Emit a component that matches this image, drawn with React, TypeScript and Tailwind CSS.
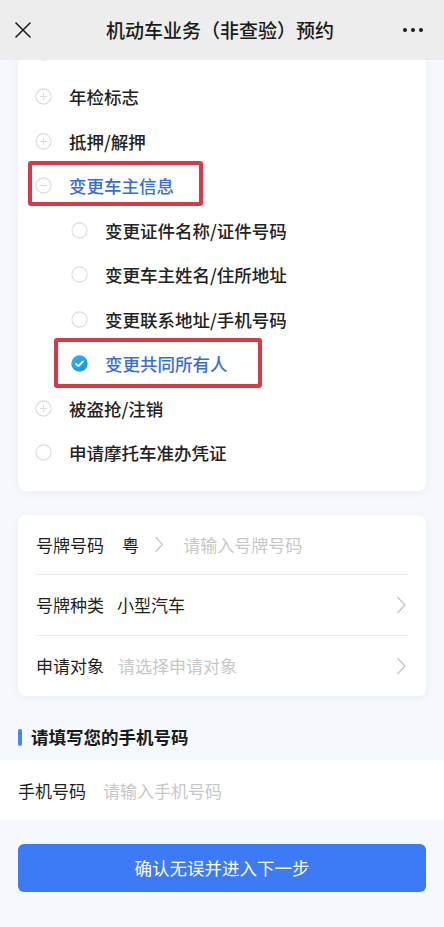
import React from "react";

/** ====== ICONS ====== */
function PlusCircle({ minus = false }: { minus?: boolean }) {
  return (
    <svg width="17" height="17" viewBox="0 0 17 17" fill="none">
      <circle cx="8.5" cy="8.5" r="7.6" stroke="#d9d9d9" strokeWidth="1.1" />
      <path d="M5 8.5h7" stroke="#d9d9d9" strokeWidth="1.1" />
      {!minus && <path d="M8.5 5v7" stroke="#d9d9d9" strokeWidth="1.1" />}
    </svg>
  );
}

function Radio() {
  return (
    <svg width="17" height="17" viewBox="0 0 17 17" fill="none">
      <circle cx="8.5" cy="8.5" r="7.6" stroke="#dcdcdc" strokeWidth="1.1" />
    </svg>
  );
}

function Checked() {
  return (
    <svg width="17" height="17" viewBox="0 0 17 17" fill="none">
      <defs>
        <linearGradient id="ck" x1="0" y1="0" x2="1" y2="1">
          <stop offset="0" stopColor="#34b6ec" />
          <stop offset="1" stopColor="#1b8fe0" />
        </linearGradient>
      </defs>
      <circle cx="8.5" cy="8.5" r="8.2" fill="url(#ck)" />
      <path d="M5 8.8l2.4 2.3 4.6-4.7" stroke="#fff" strokeWidth="1.7" strokeLinecap="round" strokeLinejoin="round" />
    </svg>
  );
}

function Chevron({ size = 18 }: { size?: number }) {
  return (
    <svg width={size * 0.6} height={size} viewBox="0 0 10 18" fill="none">
      <path d="M1.5 1.5l7 7.5-7 7.5" stroke="#c4c4c4" strokeWidth="1.3" strokeLinecap="round" strokeLinejoin="round" />
    </svg>
  );
}

/** ====== DATA ====== */
type Item = { label: string; kind: "plus" | "minus" | "radio" | "checked"; sub?: boolean; active?: boolean; boxed?: "top" | "sub" };

// first entry sits under the top bar; only the bottom of its icon peeks out
const ITEMS: Item[] = [
  { label: "", kind: "plus" },
  { label: "年检标志", kind: "plus" },
  { label: "抵押/解押", kind: "plus" },
  { label: "变更车主信息", kind: "minus", active: true, boxed: "top" },
  { label: "变更证件名称/证件号码", kind: "radio", sub: true },
  { label: "变更车主姓名/住所地址", kind: "radio", sub: true },
  { label: "变更联系地址/手机号码", kind: "radio", sub: true },
  { label: "变更共同所有人", kind: "checked", sub: true, active: true, boxed: "sub" },
  { label: "被盗抢/注销", kind: "plus" },
  { label: "申请摩托车准办凭证", kind: "radio" },
];

function ItemIcon({ kind }: { kind: Item["kind"] }) {
  if (kind === "plus") return <PlusCircle />;
  if (kind === "minus") return <PlusCircle minus />;
  if (kind === "checked") return <Checked />;
  return <Radio />;
}

/** ====== COMPONENT ====== */
export default function App() {
  return (
    <div
      className="min-h-[927px] w-full bg-[#f5f8fc] pb-8"
      style={{ fontFamily: '"Noto Sans CJK SC", "Noto Sans", sans-serif' }}
    >
      {/* Top bar */}
      <header className="sticky top-0 z-10 grid h-[60px] grid-cols-[1fr_auto_1fr] items-center bg-[#ededed] px-[15px]">
        <svg width="16" height="16" viewBox="0 0 16 16" fill="none">
          <path d="M1 1l14 14M15 1L1 15" stroke="#1a1a1a" strokeWidth="1.5" strokeLinecap="round" />
        </svg>
        <h1 className="pr-[4px] text-[19px] font-medium text-[#1a1a1a]">机动车业务（非查验）预约</h1>
        <div className="flex items-center justify-end gap-[4px] pr-[6px]">
          <span className="h-[4px] w-[4px] rounded-full bg-[#1a1a1a]" />
          <span className="h-[4px] w-[4px] rounded-full bg-[#1a1a1a]" />
          <span className="h-[4px] w-[4px] rounded-full bg-[#1a1a1a]" />
        </div>
      </header>

      {/* Business list card */}
      <section className="mx-[18px] -mt-[30px] rounded-[8px] bg-white pb-[16px] shadow-[0_2px_10px_rgba(40,80,160,0.05)]">
        {ITEMS.map((it, i) => (
          <div
            key={i}
            className={`relative flex h-[44.5px] items-center ${it.sub ? "pl-[53px]" : "pl-[17px]"}`}
          >
            {it.boxed === "top" && (
              <div className="pointer-events-none absolute left-[10px] top-[-3px] h-[45px] w-[175px] rounded-[3px] border-[4px] border-[#d63a45]" />
            )}
            {it.boxed === "sub" && (
              <div className="pointer-events-none absolute left-[36px] top-[-4px] h-[50px] w-[208px] rounded-[3px] border-[4px] border-[#d63a45]" />
            )}
            <span className="flex w-[17px] shrink-0 items-center justify-center">
              <ItemIcon kind={it.kind} />
            </span>
            <span
              className={`ml-[17px] text-[17.5px] font-medium leading-none ${it.active ? "text-[#3a6fd0]" : "text-[#222]"}`}
            >
              {it.label}
            </span>
          </div>
        ))}
      </section>

      {/* Plate card */}
      <section className="mx-[18px] mt-[24px] rounded-[8px] bg-white px-[18px] shadow-[0_2px_10px_rgba(40,80,160,0.05)]">
        <div className="flex h-[60px] items-center border-b border-[#ececec] text-[17px]">
          <span className="text-[#1f1f1f]">号牌号码</span>
          <span className="ml-[18px] text-[#1f1f1f]">粤</span>
          <span className="ml-[15px] flex items-center">
            <Chevron size={17} />
          </span>
          <span className="ml-[19px] text-[#c8c8c8]">请输入号牌号码</span>
        </div>
        <div className="flex h-[61px] items-center justify-between border-b border-[#ececec] text-[17px]">
          <div className="flex items-center">
            <span className="text-[#1f1f1f]">号牌种类</span>
            <span className="ml-[13px] text-[#1f1f1f]">小型汽车</span>
          </div>
          <span className="pr-[1px]">
            <Chevron />
          </span>
        </div>
        <div className="flex h-[60px] items-center justify-between text-[17px]">
          <div className="flex items-center">
            <span className="text-[#1f1f1f]">申请对象</span>
            <span className="ml-[14px] text-[#c8c8c8]">请选择申请对象</span>
          </div>
          <span className="pr-[1px]">
            <Chevron />
          </span>
        </div>
      </section>

      {/* Phone section */}
      <div className="mt-[28px] flex items-center px-[18px]">
        <span className="h-[17px] w-[4px] rounded-full bg-[#4a86f0]" />
        <h2 className="ml-[9px] text-[17.5px] font-bold text-[#1a1a1a]">请填写您的手机号码</h2>
      </div>
      <div className="mt-[10px] flex h-[60px] items-center bg-white px-[18px] text-[17px]">
        <span className="text-[#1f1f1f]">手机号码</span>
        <span className="ml-[17px] text-[#c8c8c8]">请输入手机号码</span>
      </div>

      <div className="mt-[24px] px-[18px]">
        <button className="flex h-[48px] w-full items-center justify-center rounded-[6px] bg-[#3d7af5] text-[17.5px] text-white">
          确认无误并进入下一步
        </button>
      </div>
    </div>
  );
}
